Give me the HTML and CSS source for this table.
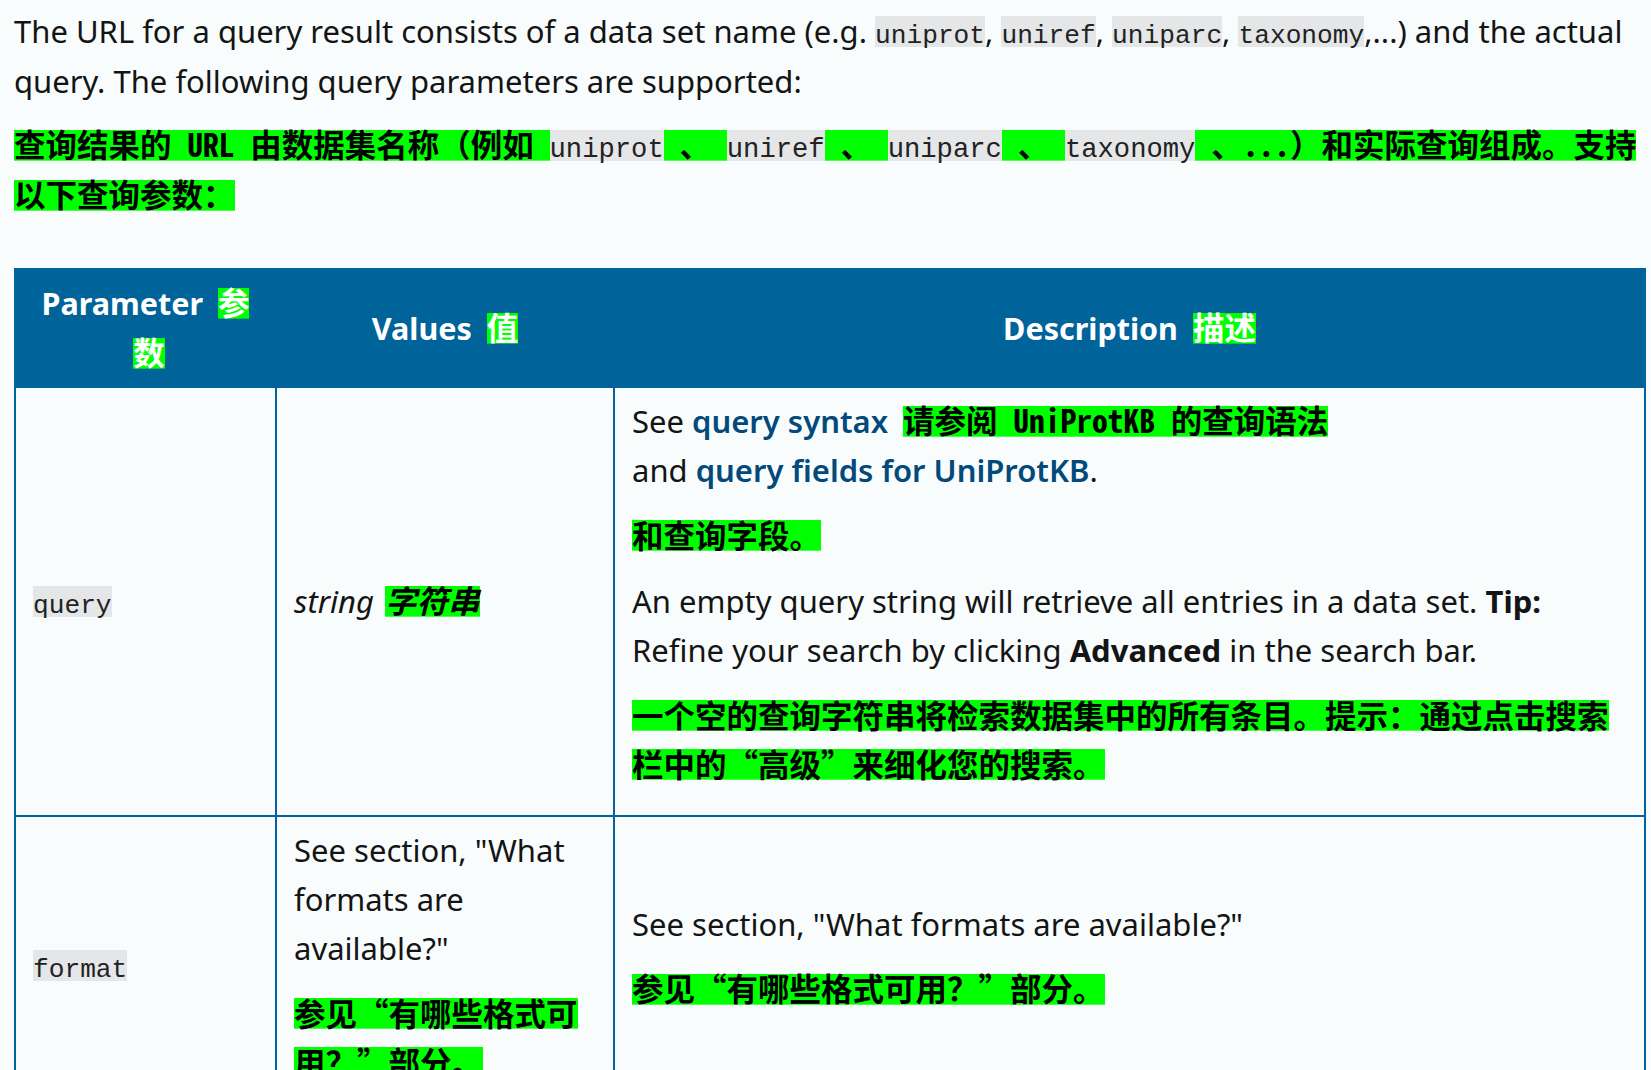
FILE: index.html
```html
<!DOCTYPE html>
<html lang="zh-CN">
<head>
<meta charset="utf-8">
<title>Query parameters</title>
<link rel="stylesheet" href="styles.css">
</head>
<body>
<p class="lead" lang="en">The URL for a query result consists of a data set name (e.g. <code>uniprot</code>, <code>uniref</code>, <code>uniparc</code>, <code>taxonomy</code>,...) and the actual query. The following query parameters are supported:</p>
<p class="zh-p"><span class="zh">查询结果的 URL 由数据集名称（例如 </span><code>uniprot</code><span class="zh"> 、 </span><code>uniref</code><span class="zh"> 、 </span><code>uniparc</code><span class="zh"> 、 </span><code>taxonomy</code><span class="zh"> 、...）和实际查询组成。支持以下查询参数：</span></p>

<table class="params">
  <colgroup>
    <col class="col-param">
    <col class="col-values">
    <col class="col-desc">
  </colgroup>
  <thead>
    <tr>
      <th>Parameter <span class="zh gap">参数</span></th>
      <th>Values <span class="zh gap">值</span></th>
      <th>Description <span class="zh gap">描述</span></th>
    </tr>
  </thead>
  <tbody>
    <tr>
      <td class="c-param"><code>query</code></td>
      <td class="c-values"><em>string</em> <span class="zh zh-i gap-i">字符串</span></td>
      <td class="c-desc">
        <p>See <a href="#">query syntax</a> <span class="zh gap">请参阅 UniProtKB 的查询语法</span><br>and <a href="#">query fields for UniProtKB</a>.</p>
        <p><span class="zh">和查询字段。</span></p>
        <p>An empty query string will retrieve all entries in a data set. <strong>Tip:</strong> Refine your search by clicking <strong>Advanced</strong> in the search bar.</p>
        <p><span class="zh">一个空的查询字符串将检索数据集中的所有条目。提示：通过点击搜索栏中的“高级”来细化您的搜索。</span></p>
      </td>
    </tr>
    <tr>
      <td class="c-param"><code>format</code></td>
      <td class="c-values">
        <p>See section, "What formats are available?"</p>
        <p><span class="zh">参见“有哪些格式可用？”部分。</span></p>
      </td>
      <td class="c-desc">
        <p>See section, "What formats are available?"</p>
        <p><span class="zh">参见“有哪些格式可用？”部分。</span></p>
      </td>
    </tr>
  </tbody>
</table>
</body>
</html>
```

FILE: styles.css
```css
* { box-sizing: border-box; }

html { background: #f8fcfd; }

body {
  margin: 0;
  padding: 6px 5px 0 14px;
  font-family: "Noto Sans", "Noto Sans CJK SC", sans-serif;
  font-size: 31px;
  line-height: 50px;
  color: #141414;
}

p { margin: 0; }

.lead { margin-bottom: 14px; }

code {
  font-family: "Liberation Mono", "DejaVu Sans Mono", monospace;
  font-size: 26.2px;
  line-height: 1;
  color: #222;
  padding-top: 5px;
  background: linear-gradient(#e4e6e8, #e4e6e8) 0 0 / 100% 31px no-repeat;
}

.zh-p code {
  font-size: 27.2px;
  padding-top: 4px;
}

.zh {
  font-family: "Noto Sans Mono CJK SC", "Noto Sans CJK SC", sans-serif;
  font-size: 31.5px;
  font-weight: 700;
  line-height: 1;
  color: #000;
  background: linear-gradient(#00ff00, #00ff00) 0 9.8px / 100% 30.7px no-repeat;
  -webkit-box-decoration-break: clone;
  box-decoration-break: clone;
}

.gap { margin-left: 7px; }
.gap-i { margin-left: 3px; }
.zh-i { font-style: italic; }

.params {
  margin-top: 48px;
  width: 100%;
  table-layout: fixed;
  border-collapse: collapse;
}

.col-param { width: 261px; }
.col-values { width: 338px; }

.params th,
.params td {
  border: 2px solid #006399;
  vertical-align: middle;
}

.params th {
  background: #006399;
  color: #fff;
  font-size: 30.5px;
  font-weight: 700;
  line-height: 50px;
  text-align: center;
  padding: 8px 16px;
}

.params th .zh { color: #fff; }

.params td {
  padding: 9px 17px;
  line-height: 49px;
  text-align: left;
}

.params td p { margin: 0 0 16.5px; }

.params a {
  color: #034a7b;
  font-weight: 600;
  text-decoration: none;
}

.params strong { font-weight: 700; }
.params em { font-style: italic; }
```
